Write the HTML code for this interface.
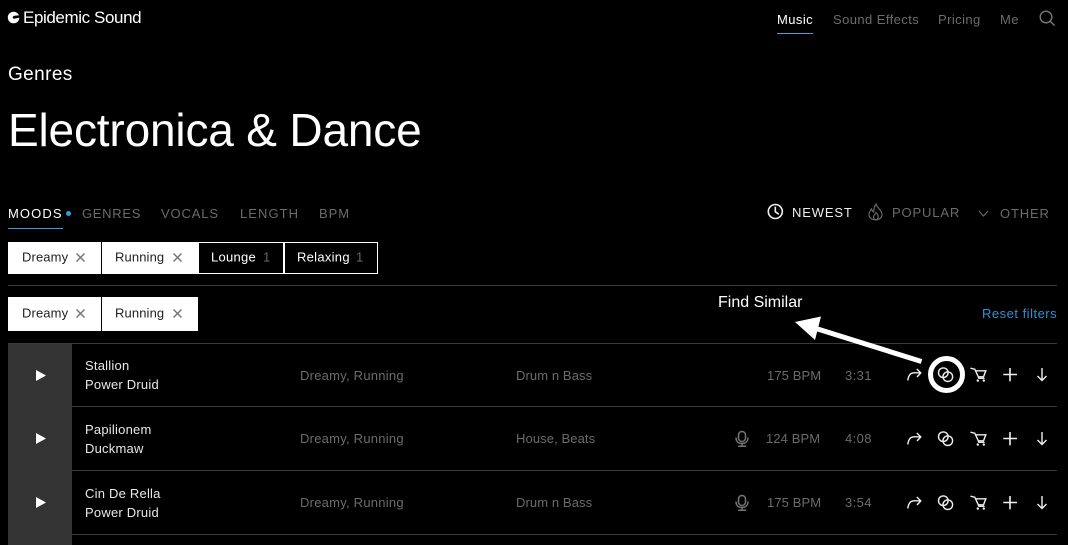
<!DOCTYPE html>
<html><head><meta charset="utf-8">
<style>
html,body{margin:0;padding:0;background:#000;width:1068px;height:545px;overflow:hidden}
body{position:relative;font-family:"Liberation Sans",sans-serif;color:#fff}
.t{position:absolute;white-space:nowrap;line-height:1}
.g{color:#6b6b6b}
.nav{font-size:13px;letter-spacing:.42px;top:13px}
.tab{font-size:13px;top:207px}
.srt{font-size:13px;letter-spacing:.85px}
.chip{position:absolute;background:#fff;color:#222;font-size:13px;box-sizing:border-box}
.chip span{position:absolute;top:50%;margin-top:-1px;transform:translateY(-50%);left:14px;letter-spacing:.12px;white-space:nowrap}
.chip svg{position:absolute;top:50%;margin-top:-5px;left:68px}
.dark{background:#000;border:1px solid #fff;color:#fff}
.dark span{letter-spacing:.28px}
.dark b{position:absolute;font-weight:normal;color:#666;top:50%;margin-top:-1px;transform:translateY(-50%)}
.line{position:absolute;height:1px;background:#3a3a3a}
.c{font-size:13px;color:#6b6b6b;letter-spacing:.24px}
.d{font-size:13px;color:#6b6b6b;letter-spacing:.1px}
.m{font-size:13px;color:#6b6b6b;letter-spacing:.4px}
.n{font-size:13px;color:#e8e8e8;letter-spacing:.22px}
svg{position:absolute;overflow:hidden}
</style></head><body>

<svg style="left:0;top:0" width="30" height="30" viewBox="0 0 30 30"><circle cx="13.600" cy="17.500" r="5.800" fill="#fff"/><path d="M20 15.200L14.400 15.800C12.400 16.100 12 18.400 14 18.700L20 17.600Z" fill="#000"/><path d="M15.500 10.500L20 10.500L20 13L17 13Z" fill="#000"/></svg>
<div class="t" style="left:23px;top:9px;font-size:17px;letter-spacing:-.4px">Epidemic Sound</div>

<div class="t nav" style="left:777px;color:#fff">Music</div>
<div style="position:absolute;left:777px;top:33px;width:36px;height:1px;background:#4a9fd8"></div>
<div class="t nav g" style="left:833px">Sound Effects</div>
<div class="t nav g" style="left:938px">Pricing</div>
<div class="t nav g" style="left:1000px">Me</div>
<svg style="left:1039px;top:10px" width="17" height="17" fill="none" stroke="#777" stroke-width="1.4"><circle cx="7" cy="7" r="5.800"/><path d="M11.200 11.200L15.600 15.600"/></svg>

<div class="t" style="left:8px;top:65px;font-size:19px;letter-spacing:.4px">Genres</div>
<div class="t" style="left:8px;top:107px;font-size:46px;letter-spacing:-.17px">Electronica &amp; Dance</div>

<div class="t tab" style="left:8px;color:#fff;letter-spacing:1.1px">MOODS</div>
<div style="position:absolute;left:66px;top:211px;width:5px;height:5px;border-radius:50%;background:#2f9be0"></div>
<div style="position:absolute;left:8px;top:228px;width:55px;height:1px;background:#3f9ad8"></div>
<div class="t tab g" style="left:82px;letter-spacing:.7px">GENRES</div>
<div class="t tab g" style="left:161px;letter-spacing:.85px">VOCALS</div>
<div class="t tab g" style="left:240px;letter-spacing:1.05px">LENGTH</div>
<div class="t tab g" style="left:319px;letter-spacing:.95px">BPM</div>

<svg style="left:767px;top:203px" width="17" height="17" fill="none" stroke="#eee" stroke-width="1.6"><circle cx="8.300" cy="8.500" r="7"/><path d="M8.300 3.600V8.800L11.800 11.200"/></svg>
<div class="t srt" style="left:792px;top:206px;color:#eee">NEWEST</div>
<svg style="left:868px;top:203px" width="15" height="18" fill="none" stroke="#666" stroke-width="1.200"><path d="M8 1C8.500 4 13.800 7 14 11.500C14 15 11 16.800 7.500 16.800C3.500 16.800 1 14.500 1 11.500C1 9 2.500 7.500 3.500 6C4 7.500 4.500 8.500 5.500 9C6 6.500 6.500 3 8 1Z"/><path d="M7.500 16.800C5.500 16 5 14 6 12.500C6.800 11.300 7.500 10.500 7.800 9.500C9.500 11 10.500 12.500 10.200 14.300C10 15.500 9 16.500 7.500 16.800Z"/></svg>
<div class="t g srt" style="left:892px;top:206px">POPULAR</div>
<svg style="left:978px;top:210px" width="11" height="7" fill="none" stroke="#666" stroke-width="1.200"><path d="M1 1L5.500 6L10 1"/></svg>
<div class="t g srt" style="left:1000px;top:207px">OTHER</div>

<div class="chip" style="left:8px;top:242px;width:93px;height:32px"><span>Dreamy</span><svg width="9" height="9" stroke="#777" stroke-width="1.500"><path d="M.5 .5L8.500 8.500M8.500 .5L.5 8.500"/></svg></div>
<div class="chip" style="left:102px;top:242px;width:96px;height:32px"><span style="left:13px">Running</span><svg style="left:71px" width="9" height="9" stroke="#777" stroke-width="1.500"><path d="M.5 .5L8.500 8.500M8.500 .5L.5 8.500"/></svg></div>
<div class="chip dark" style="left:198px;top:242px;width:86px;height:32px"><span style="left:12px">Lounge</span><b style="left:64px">1</b></div>
<div class="chip dark" style="left:284px;top:242px;width:94px;height:32px"><span style="left:12px">Relaxing</span><b style="left:71px">1</b></div>
<div class="line" style="left:8px;top:285px;width:1049px"></div>
<div class="chip" style="left:8px;top:297px;width:93px;height:34px"><span>Dreamy</span><svg width="9" height="9" stroke="#777" stroke-width="1.500"><path d="M.5 .5L8.500 8.500M8.500 .5L.5 8.500"/></svg></div>
<div class="chip" style="left:102px;top:297px;width:96px;height:34px"><span style="left:13px">Running</span><svg style="left:71px" width="9" height="9" stroke="#777" stroke-width="1.500"><path d="M.5 .5L8.500 8.500M8.500 .5L.5 8.500"/></svg></div>

<div class="t" style="left:718px;top:295px;font-size:16px">Find Similar</div>
<div class="t" style="left:982px;top:307px;font-size:13px;color:#2f90d0;letter-spacing:.5px">Reset filters</div>

<div class="line" style="left:8px;top:343px;width:1049px"></div>
<div style="position:absolute;left:8px;top:344px;width:64px;height:201px;background:#333"></div>
<div class="line" style="left:72px;top:406px;width:985px"></div>
<div class="line" style="left:72px;top:470px;width:985px"></div>
<div class="line" style="left:72px;top:534px;width:985px"></div>

<svg style="left:36px;top:370px" width="11" height="11"><path d="M0 0L10 5.500L0 11Z" fill="#fff"/></svg>
<svg style="left:36px;top:433px" width="11" height="11"><path d="M0 0L10 5.500L0 11Z" fill="#fff"/></svg>
<svg style="left:36px;top:497px" width="11" height="11"><path d="M0 0L10 5.500L0 11Z" fill="#fff"/></svg>

<div class="t n" style="left:85px;top:359px">Stallion</div>
<div class="t n" style="left:85px;top:378px">Power Druid</div>
<div class="t n" style="left:85px;top:423px">Papilionem</div>
<div class="t n" style="left:85px;top:442px">Duckmaw</div>
<div class="t n" style="left:85px;top:487px">Cin De Rella</div>
<div class="t n" style="left:85px;top:506px">Power Druid</div>

<div class="t c" style="left:300px;top:369px">Dreamy, Running</div>
<div class="t d" style="left:516px;top:369px">Drum n Bass</div>
<div class="t d" style="left:767px;top:369px">175 BPM</div>
<div class="t m" style="left:845px;top:369px">3:31</div>

<div class="t c" style="left:300px;top:432px">Dreamy, Running</div>
<div class="t d" style="left:516px;top:432px">House, Beats</div>
<div class="t d" style="left:766px;top:432px">124 BPM</div>
<div class="t m" style="left:845px;top:432px">4:08</div>

<div class="t c" style="left:300px;top:496px">Dreamy, Running</div>
<div class="t d" style="left:516px;top:496px">Drum n Bass</div>
<div class="t d" style="left:767px;top:496px">175 BPM</div>
<div class="t m" style="left:845px;top:496px">3:54</div>

<svg style="left:730px;top:425px" width="24" height="90" fill="none" stroke="#757575" stroke-width="1.500">
<rect x="8.500" y="6.500" width="7" height="10" rx="3.400"/><path d="M6 12.500C6 16.500 8.500 18.500 12 18.500C15.500 18.500 18 16.500 18 12.500M12 18.500V21M8 21.200H16"/>
<rect x="8.500" y="70.500" width="7" height="10" rx="3.400"/><path d="M6 76.500C6 80.500 8.500 82.500 12 82.500C15.500 82.500 18 80.500 18 76.500M12 82.500V85M8 85.200H16"/>
</svg>

<svg style="left:0;top:0" width="1068" height="545">
<defs><g id="r" fill="none" stroke="#eee" stroke-width="1.400">
<path d="M907.800 380.500C908.500 375 910.500 372.800 914 372.800H920.500M916.800 369L920.800 372.900L917 377"/>
<circle cx="943.300" cy="372.700" r="4.800"/><circle cx="947.800" cy="376.700" r="4.800"/>
<path d="M970.500 368.200L974.800 369.200L979 378.300H984.500"/>
<path d="M975.200 370.800H985.800L983.500 376.800H977.700"/>
<circle cx="977.800" cy="380.600" r="1.200" fill="#eee" stroke="none"/><circle cx="983.800" cy="380.600" r="1.200" fill="#eee" stroke="none"/>
<path d="M1003.300 374.500H1017M1010 368V381.300" stroke-width="1.600"/>
<path d="M1042 368V380.500M1037.500 376L1042 380.500L1046.500 376"/>
</g></defs>
<use href="#r"/><use href="#r" y="64"/><use href="#r" y="128"/>
<circle cx="946.500" cy="374.500" r="16" fill="none" stroke="#fff" stroke-width="5"/>
<path d="M921.500 361.500L816 328.500" stroke="#fff" stroke-width="5" fill="none"/>
<path d="M795 322L821 316.500L815 340Z" fill="#fff"/>
</svg>
</body></html>
